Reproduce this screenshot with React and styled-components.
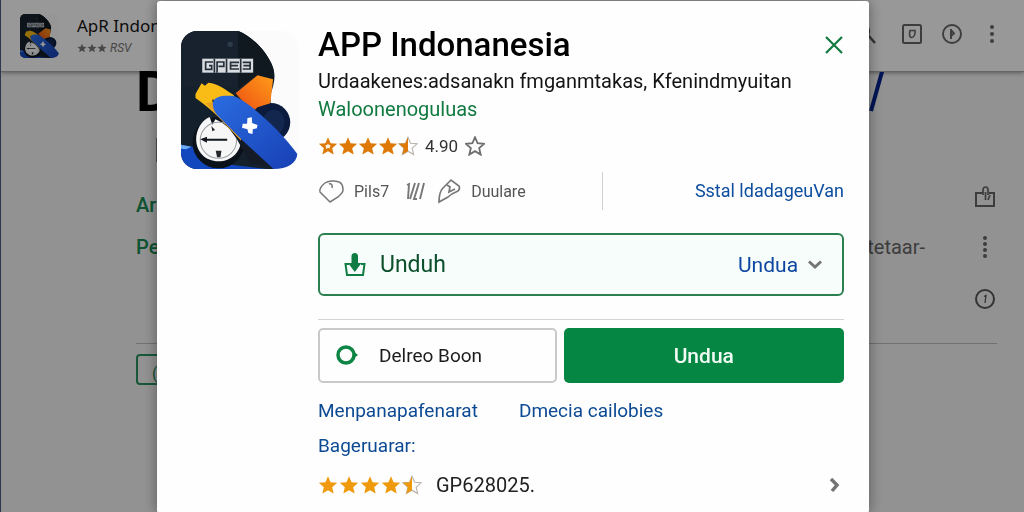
import styled, { createGlobalStyle } from 'styled-components';

const GlobalStyle = createGlobalStyle`
  * {
    box-sizing: border-box;
  }
  body {
    margin: 0;
    font-family: Roboto, "Liberation Sans", sans-serif;
    color: #141414;
  }
  h1, h2, p {
    margin: 0;
  }
  button, select {
    padding: 0;
    border: none;
    background: none;
    font-family: inherit;
    cursor: pointer;
  }
  a {
    text-decoration: none;
  }
  svg {
    display: block;
    flex-shrink: 0;
  }
`;

const STAR = "M12 1.5l3.1 7.2 7.9.7-6 5.2 1.8 7.7L12 18.2l-6.8 4.1L7 14.6 1 9.4l7.9-.7z";
const HALF_STAR = "M12 1.5V18.2l-6.8 4.1L7 14.6 1 9.4l7.9-.7z";

const Star = ({ size = 20, color, half, empty }) => (
  <svg width={size} height={size} viewBox="0 0 24 24">
    {(half || empty) && (
      <path d={STAR} fill="none" stroke={empty ? "#6f6f6f" : "#b9b3a8"} strokeWidth={empty ? 2.2 : 1.3} />
    )}
    {!empty && <path d={half ? HALF_STAR : STAR} fill={color} />}
  </svg>
);

const Stars = ({ color, marked }) => (
  <StarRow role="img" aria-label="4.5">
    {marked ? (
      <svg width="20" height="20" viewBox="0 0 24 24">
        <path d={STAR} fill={color} />
        <path d="M9 11l3-1 3 1-1 4-2-1-2 2z" fill="#fff3dc" />
      </svg>
    ) : <Star color={color} />}
    <Star color={color} />
    <Star color={color} />
    <Star color={color} />
    <Star color={color} half />
  </StarRow>
);

const AppLogo = ({ id, ...props }) => (
  <svg viewBox="35 33 347 414" preserveAspectRatio="none" {...props}>
    <defs>
      <clipPath id={`${id}-clip`}>
        <rect x="35" y="33" width="347" height="414" rx="48" />
      </clipPath>
      <linearGradient id={`${id}-blue`} x1="0" y1="0" x2="1" y2="1">
        <stop offset="0" stopColor="#2a6ce0" />
        <stop offset="1" stopColor="#1740b4" />
      </linearGradient>
      <linearGradient id={`${id}-orange`} x1="1" y1="0" x2="0" y2="1">
        <stop offset="0" stopColor="#ff9c1a" />
        <stop offset="1" stopColor="#ec4d12" />
      </linearGradient>
    </defs>
    <g clipPath={`url(#${id}-clip)`}>
      <rect x="35" y="33" width="347" height="414" fill="#fbfbfc" />
      <path d="M35 33H205C245 48 290 95 307 140C318 170 310 195 300 225L310 447H35Z" fill="#15202d" />
      <path d="M35 33H205V200H35Z" fill="#18222f" />
      <path d="M205 33C245 48 290 95 307 140C312 156 312 170 309 182L262 164L205 205Z" fill="#101820" />
      <circle cx="181" cy="73" r="8" fill="#2d3b49" />
      <path d="M35 374L90 384L150 430L290 447H35Z" fill="#1247bd" />
      <path d="M35 374L66 380L50 388L35 386Z" fill="#6cadf3" />
      <ellipse cx="302" cy="307" rx="57" ry="58" fill="#0a1b3d" />
      <ellipse cx="310" cy="307" rx="32" ry="38" fill="#13264e" />
      <path d="M197 220L262 166L308 178L300 250L262 262L246 276Z" fill={`url(#${id}-orange)`} />
      <circle cx="146" cy="368" r="77" fill="#0b1119" />
      <path d="M120 291C96 300 80 330 80 358C80 396 108 424 146 424C184 424 212 396 213 360C190 335 165 310 137 298L128 314Z" fill="#f7f7f7" />
      <circle cx="146" cy="361" r="54" fill="none" stroke="#9a9ea2" strokeWidth="3" />
      <path d="M92 358L112 350V356H172V362H112V368Z" fill="#14181d" />
      <path d="M138 392H155L152 412H142ZM125 318L136 330L128 334Z" fill="#23272c" />
      <path d="M78 222L96 190L106 197L116 188C145 190 165 208 190 224L215 262L212 360C175 320 130 270 78 234Z" fill="#f9bb16" />
      <path d="M129 236L215 350L300 440L240 430L200 356C175 320 150 290 126 262Z" fill="#141b27" />
      <path d="M108 250L130 246L213 345L213 362Z" fill="#e8a021" />
      <path
        d="M130 246C136 228 160 225 190 228C230 240 330 330 380 402C378 430 350 447 310 447L216 360L142 285C132 272 128 260 130 246Z"
        fill={`url(#${id}-blue)`}
      />
      <path d="M232 294L245 292L246 309L262 315L260 325L248 328L247 342L235 339L232 328L216 323L218 311L231 311Z" fill="#fff" />
      <rect x="98" y="116" width="151" height="42" fill="#d9dde1" />
      <g fill="none" stroke="#26303b" strokeWidth="5">
        <path d="M130 126H108V148H126V137H118M134 116V158M142 158V126H162V139H146M170 116V158M207 127H182V147H207M184 137H204M212 116V158M218 127H240V147H218M220 137H240" />
      </g>
    </g>
  </svg>
);

const Dots = ({ count }) => (
  <svg width="24" height="28" viewBox="0 0 24 28" fill="#666">
    {Array.from({ length: count }, (_, i) => (
      <circle key={i} cx="12" cy={14 + (i - (count - 1) / 2) * (count === 3 ? 7 : 6)} r="2" />
    ))}
  </svg>
);

const App = () => {
  return (
    <>
      <GlobalStyle />
      <Page>
        <TopBar>
          <AppLogo id="small" width="39" height="44" />
          <TopTitle>
            <TopName>ApR Indon</TopName>
            <TopRating>
              <Star size={10} color="#777" />
              <Star size={10} color="#777" />
              <Star size={10} color="#777" />
              <em>RSV</em>
            </TopRating>
          </TopTitle>
          <TopActions>
            <IconButton aria-label="Cari">
              <svg width="24" height="24" viewBox="0 0 24 24" fill="none" stroke="#555" strokeWidth="2.4">
                <circle cx="9" cy="9" r="6" />
                <path d="M14 13l7 8" />
              </svg>
            </IconButton>
            <IconButton aria-label="Simpan">
              <svg width="24" height="24" viewBox="0 0 24 24" fill="none" stroke="#666" strokeWidth="2">
                <rect x="3" y="3" width="18" height="18" rx="1.5" />
                <path d="M10 8.500h5c.5 4-1 7-3.500 7-2 0-2.500-3-1.500-7z" strokeWidth="1.600" />
              </svg>
            </IconButton>
            <IconButton aria-label="Putar">
              <svg width="24" height="24" viewBox="0 0 24 24" fill="none" stroke="#666" strokeWidth="1.900">
                <circle cx="12" cy="12" r="9" />
                <path d="M11 7v10M11 8l3 3.500L11 14" />
              </svg>
            </IconButton>
            <IconButton aria-label="Menu"><Dots count={3} /></IconButton>
          </TopActions>
        </TopBar>

        <Body>
          <BigTitle>
            D
            <svg width="16" height="40" viewBox="0 0 16 40" stroke="#00228f" strokeWidth="4">
              <path d="M13.500 -2L2 39" />
            </svg>
          </BigTitle>
          <Marker />
          <InfoRow $height={40}>
            <InfoLink href="#ar" $align="flex-end">Ar</InfoLink>
            <IconButton aria-label="Bagikan" $align="flex-start">
              <svg width="24" height="32" viewBox="0 0 24 32" fill="none" stroke="#666" strokeWidth="2">
                <path d="M10 12H3v13h18V12h-5" />
                <path d="M12.500 19v-8M10 14V9c0-4 5-4 5 0v5M15 19l2-5" strokeWidth="1.700" />
              </svg>
            </IconButton>
          </InfoRow>
          <InfoRow $height={52}>
            <InfoLink href="#pe">Pe</InfoLink>
            <InfoValue>itetaar-</InfoValue>
            <IconButton aria-label="Lainnya"><Dots count={4} /></IconButton>
          </InfoRow>
          <InfoRow $height={52}>
            <IconButton aria-label="Info">
              <svg width="24" height="24" viewBox="0 0 24 24" fill="none" stroke="#555" strokeWidth="2">
                <circle cx="12" cy="12" r="9" />
                <path d="M11 9.500l2-1-1 7.500" strokeWidth="1.300" />
              </svg>
            </IconButton>
          </InfoRow>
          <PageLine />
          <OutlineButton>(</OutlineButton>
        </Body>
      </Page>

      <Backdrop>
        <Modal role="dialog" aria-labelledby="app-title">
          <AppLogo id="big" width="117" height="138" />
          <Content>
            <TitleRow>
              <Title id="app-title">APP Indonanesia</Title>
              <IconButton aria-label="Tutup">
                <svg width="22" height="22" viewBox="0 0 22 22" stroke="#11793f" strokeWidth="2.200">
                  <path d="M4 3l16 16M20 3L4 19" />
                </svg>
              </IconButton>
            </TitleRow>
            <Subtitle>Urdaakenes:adsanakn fmganmtakas, Kfenindmyuitan</Subtitle>
            <Developer href="#developer">Waloonenoguluas</Developer>

            <Rating>
              <Stars color="#de7806" marked />
              <span>4.90</span>
              <Star empty />
            </Rating>

            <Meta>
              <svg width="26" height="26" viewBox="0 0 26 26" fill="none" stroke="#777" strokeWidth="1.500">
                <path d="M12 24L2 14C1 12 3 8 7 5c3-2 9-3 14-1 3 1 4 5 4 8 0 3-3 5-5 7l-8 5z" />
                <path d="M11 6c2-1 4 1 3 4" />
              </svg>
              <MetaText>Pils7</MetaText>
              <svg width="20" height="20" viewBox="0 0 20 20" fill="none" stroke="#777" strokeWidth="1.900">
                <path d="M2 4l2-1-1 15M10 2L5 18M14 2L9 18h3M19 2l-4 16" />
              </svg>
              <svg width="24" height="26" viewBox="0 0 24 26" fill="none" stroke="#777" strokeWidth="1.700">
                <path d="M2 24c0-6 1-11 4-14l8-8 8 6c1 2 0 4-1 5-5 2-7 3-10 6z" />
                <path d="M10 7l3 2-1 5 6-3" />
              </svg>
              <MetaText>Duulare</MetaText>
              <MetaLink href="#detail">Sstal ldadageuVan</MetaLink>
            </Meta>

            <DownloadBar>
              <DownloadButton>
                <svg width="22" height="26" viewBox="0 0 22 26">
                  <path d="M7.500 4c0-4 6.500-4 6.500 0v7h3.500l-6.700 9L4 11h3.500z" fill="#0f7d43" />
                  <path d="M5 12H1.500L3 23h16l1.500-11H17" fill="none" stroke="#0f7d43" strokeWidth="2" />
                </svg>
                Unduh
              </DownloadButton>
              <Picker>
                <select aria-label="Pilihan unduhan">
                  <option>Undua</option>
                </select>
                <svg width="16" height="12" viewBox="0 0 16 12" fill="none" stroke="#747474" strokeWidth="3">
                  <path d="M2 2.500l6 5.500 6-5.500" />
                </svg>
              </Picker>
            </DownloadBar>

            <Line />

            <Buttons>
              <PlainButton>
                <svg width="24" height="24" viewBox="0 0 24 24">
                  <circle cx="11" cy="11" r="8" fill="none" stroke="#0e8545" strokeWidth="3.500" />
                  <path d="M18 7l5 4-5 4z" fill="#0e8545" />
                </svg>
                Delreo Boon
              </PlainButton>
              <PrimaryButton>Undua</PrimaryButton>
            </Buttons>

            <Links>
              <a href="#men">Menpanapafenarat</a>
              <a href="#dme">Dmecia cailobies</a>
              <a href="#bag">Bageruarar:</a>
            </Links>

            <Reviews>
              <Stars color="#ef9a0c" />
              <span>GP628025.</span>
              <svg width="12" height="16" viewBox="0 0 12 16" fill="none" stroke="#747474" strokeWidth="3.500">
                <path d="M2 2L8 8 3 14" />
              </svg>
            </Reviews>
          </Content>
        </Modal>
      </Backdrop>
    </>
  );
};

const Page = styled.div`
  height: 100vh;
  overflow: hidden;
  border-left: 1px solid #4a5a80;
  background-color: #f3f3f3;
`;

const TopBar = styled.header`
  display: flex;
  align-items: center;
  height: 72px;
  padding: 0 20px 0 19px;
  background-color: #fdfdfd;
  border-bottom: 1px solid #aaa;
  box-shadow: 0 1px 4px #999;
`;

const TopTitle = styled.div`
  margin-left: 18px;
`;

const TopName = styled.p`
  font-family: "Noto Sans", sans-serif;
  font-size: 17px;
  line-height: 24px;
`;

const TopRating = styled.div`
  display: flex;
  align-items: center;
  font-size: 12px;
  line-height: 20px;
  color: #777;

  em {
    margin-left: 3px;
  }
`;

const TopActions = styled.div`
  display: flex;
  gap: 16px;
  margin-left: auto;
  padding-bottom: 4px;

  button:first-child {
    margin-right: 6px;
  }
`;

const IconButton = styled.button`
  display: flex;
  align-items: center;
  align-self: ${(props) => props.$align || "center"};
`;

const Body = styled.main`
  padding: 0 27px 0 135px;
`;

const BigTitle = styled.h2`
  display: flex;
  justify-content: space-between;
  padding-right: 112px;
  font-size: 56px;
  line-height: 40px;
  color: #000;
`;

const Marker = styled.div`
  height: 24px;
  margin: 26px 0 19px 20px;
  border-left: 1px solid #888;
`;

const InfoRow = styled.div`
  display: flex;
  justify-content: flex-end;
  align-items: center;
  gap: 48px;
  height: ${(props) => props.$height}px;
  font-size: 20px;
  line-height: 32px;
`;

const InfoLink = styled.a`
  align-self: ${(props) => props.$align || "center"};
  margin-right: auto;
  font-weight: 500;
  color: #158a52;
`;

const InfoValue = styled.span`
  color: #666;
`;

const PageLine = styled.div`
  margin: 18px 0 10px;
  border-top: 1px solid #bbb;
`;

const OutlineButton = styled.button`
  width: 120px;
  height: 31px;
  padding: 8px 0 0 14px;
  border: 2px solid #2a9160;
  border-radius: 4px;
  font-size: 16px;
  line-height: 16px;
  text-align: left;
  color: #158a52;
`;

const Backdrop = styled.div`
  position: fixed;
  inset: 0;
  display: flex;
  justify-content: center;
  align-items: flex-start;
  padding: 1px 0 0 2px;
  overflow: hidden;
  background-color: rgba(0, 0, 0, 0.4);
`;

const Modal = styled.section`
  display: flex;
  align-items: flex-start;
  gap: 20px;
  width: 100%;
  max-width: 712px;
  min-height: 100vh;
  padding: 24px 25px 8px 24px;
  border-radius: 3px;
  background-color: #fefefe;
  box-shadow: 0 0 14px rgba(0, 0, 0, 0.4);

  > svg {
    margin-top: 6px;
  }
`;

const Content = styled.div`
  flex: 1;
  min-width: 0;
`;

const TitleRow = styled.div`
  display: flex;
  justify-content: space-between;
  align-items: center;
  margin-bottom: 2px;
`;

const Title = styled.h1`
  font-size: 33px;
  font-weight: 500;
  line-height: 40px;
  color: #000;
`;

const Subtitle = styled.p`
  font-size: 20px;
  line-height: 28px;
  white-space: nowrap;
`;

const Developer = styled.a`
  display: block;
  font-size: 20px;
  line-height: 28px;
  color: #117a40;
`;

const Rating = styled.div`
  display: flex;
  align-items: center;
  gap: 7px;
  margin-top: 12px;
  font-size: 17px;
  line-height: 22px;
  color: #333;
`;

const StarRow = styled.div`
  display: flex;
  gap: 0;
`;

const Meta = styled.div`
  display: flex;
  align-items: center;
  height: 38px;
  margin: 15px 0 23px;
  font-size: 18px;
`;

const MetaText = styled.span`
  margin: 0 16px 0 10px;
  font-size: 16px;
  color: #555;

  & + svg + svg {
    margin-left: 12px;
  }
`;

const MetaLink = styled.a`
  flex: 0 0 46%;
  margin-left: auto;
  border-left: 1px solid #d0d0d0;
  line-height: 38px;
  text-align: right;
  color: #0d4ea0;
`;

const DownloadBar = styled.div`
  display: flex;
  justify-content: space-between;
  align-items: center;
  height: 63px;
  padding: 0 19px 0 24px;
  border: 2px solid #2b7f50;
  border-radius: 6px;
  background-color: #f7fdfa;
`;

const DownloadButton = styled.button`
  display: flex;
  align-items: center;
  gap: 14px;
  font-size: 23px;
  color: #0b4f2c;
`;

const Picker = styled.div`
  display: flex;
  align-items: center;
  gap: 8px;

  select {
    appearance: none;
    font-size: 21px;
    color: #0d47a1;
  }
`;

const Line = styled.div`
  margin: 23px 0 8px;
  border-top: 1px solid #d4d4d4;
`;

const Buttons = styled.div`
  display: grid;
  grid-template-columns: 239fr 281fr;
  gap: 7px;
`;

const PlainButton = styled.button`
  display: flex;
  align-items: center;
  gap: 20px;
  height: 55px;
  padding: 0 15px;
  border: 2px solid #c9c9cb;
  border-radius: 5px;
  font-size: 19px;
  color: #1c1c1c;
`;

const PrimaryButton = styled.button`
  height: 55px;
  border-radius: 5px;
  background-color: #058743;
  font-size: 21px;
  font-weight: 500;
  color: #f1fbf4;
`;

const Links = styled.nav`
  display: flex;
  flex-wrap: wrap;
  gap: 13px 41px;
  margin: 17px 100px 17px 0;
  font-size: 19px;
  line-height: 22px;

  a {
    color: #0d4a94;
  }
`;

const Reviews = styled.div`
  display: flex;
  align-items: center;
  gap: 14px;
  font-size: 20px;
  line-height: 22px;
  color: #222;

  ${StarRow} {
    gap: 1px;
  }
  > svg {
    margin: 0 3px 0 auto;
  }
`;

export default App;
